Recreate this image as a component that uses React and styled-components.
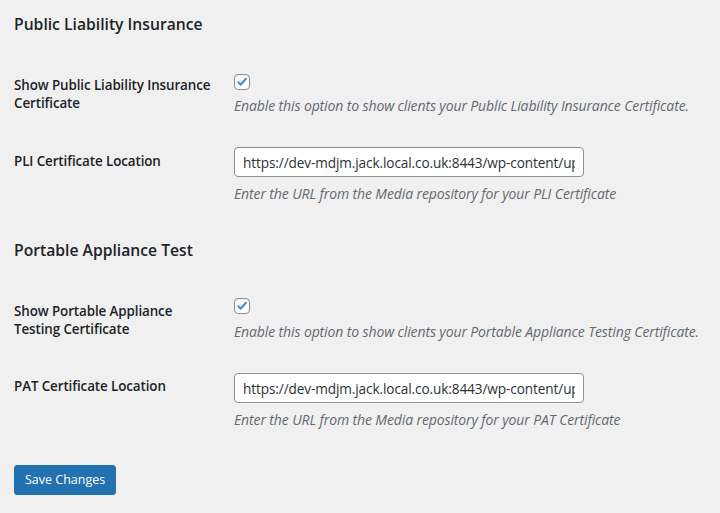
import React from "react";
import styled, { createGlobalStyle } from "styled-components";

const Global = createGlobalStyle`
  html, body { margin: 0; padding: 0; background: #f0f0f1; }
  body { font-family: "Open Sans", "Noto Sans", sans-serif; color: #1d2327; }
  * { box-sizing: border-box; }
`;

const Page = styled.div`
  padding: 13px 14px 20px 14px;
  width: 720px;
`;

const SectionTitle = styled.h2`
  margin: ${(p) => (p.$first ? "0" : "21px")} 0 20px 0;
  font-size: 15.7px;
  line-height: 22px;
  font-weight: 600;
  color: #1d2327;
`;

const Row = styled.div`
  display: grid;
  grid-template-columns: 210px 1fr;
`;

const Label = styled.div`
  padding: ${(p) => p.$top}px 10px ${(p) => 40 - p.$top}px 0;
  font-size: 13.4px;
  line-height: 18px;
  font-weight: 600;
  letter-spacing: -0.1px;
  color: #1d2327;
`;

const Field = styled.div`
  padding: ${(p) => p.$top}px 10px 15px 10px;
  display: flex;
  flex-direction: column;
  align-items: flex-start;
`;

const Box = styled.span`
  width: 16px;
  height: 16px;
  border: 1px solid #8c8f94;
  border-radius: 4px;
  background: #fff;
  display: flex;
  align-items: center;
  justify-content: center;
  box-shadow: inset 0 1px 2px rgba(0,0,0,0.1);
`;

const TextInput = styled.input`
  width: 350px;
  height: 30px;
  margin: 0;
  border: 1px solid #8c8f94;
  border-radius: 4px;
  background: #fff;
  padding: 0 8px;
  font-family: "Open Sans", "Noto Sans", sans-serif;
  font-size: 13.6px;
  line-height: 28px;
  color: #2c3338;
  letter-spacing: -0.1px;
  outline: none;
`;

const Description = styled.p`
  margin: ${(p) => p.$gap}px 0 0 0;
  font-size: 14px;
  line-height: 19px;
  font-style: italic;
  color: #646970;
  letter-spacing: -0.12px;
  white-space: nowrap;
`;

const Button = styled.button`
  margin-top: 21px;
  height: 30px;
  padding: 0 10px;
  background: #2271b1;
  border: 1px solid #2271b1;
  border-radius: 3px;
  color: #fff;
  font-family: inherit;
  font-size: 12.5px;
  line-height: 28px;
  cursor: pointer;
`;

const Check = () => (
  <Box>
    <svg width="14" height="14" viewBox="0 0 20 20">
      <path d="M4.5 10.2 L8.2 13.8 L15.6 5.2" fill="none" stroke="#3582c4" strokeWidth="2.6" strokeLinecap="round" strokeLinejoin="round" />
    </svg>
  </Box>
);

const url = "https://dev-mdjm.jack.local.co.uk:8443/wp-content/uploads/certificate.pdf";

export default function App() {
  return (
    <Page>
      <Global />
      <SectionTitle $first>Public Liability Insurance</SectionTitle>
      <Row>
        <Label $top={21}>Show Public Liability Insurance Certificate</Label>
        <Field $top={19}>
          <Check />
          <Description $gap={6}>Enable this option to show clients your Public Liability Insurance Certificate.</Description>
        </Field>
      </Row>
      <Row>
        <Label $top={21}>PLI Certificate Location</Label>
        <Field $top={16}>
          <TextInput type="text" defaultValue={url} readOnly />
          <Description $gap={7}>Enter the URL from the Media repository for your PLI Certificate</Description>
        </Field>
      </Row>
      <SectionTitle>Portable Appliance Test</SectionTitle>
      <Row>
        <Label $top={21}>Show Portable Appliance Testing Certificate</Label>
        <Field $top={17}>
          <Check />
          <Description $gap={8}>Enable this option to show clients your Portable Appliance Testing Certificate.</Description>
        </Field>
      </Row>
      <Row>
        <Label $top={20}>PAT Certificate Location</Label>
        <Field $top={16}>
          <TextInput type="text" defaultValue={url} readOnly />
          <Description $gap={7}>Enter the URL from the Media repository for your PAT Certificate</Description>
        </Field>
      </Row>
      <Button>Save Changes</Button>
    </Page>
  );
}
